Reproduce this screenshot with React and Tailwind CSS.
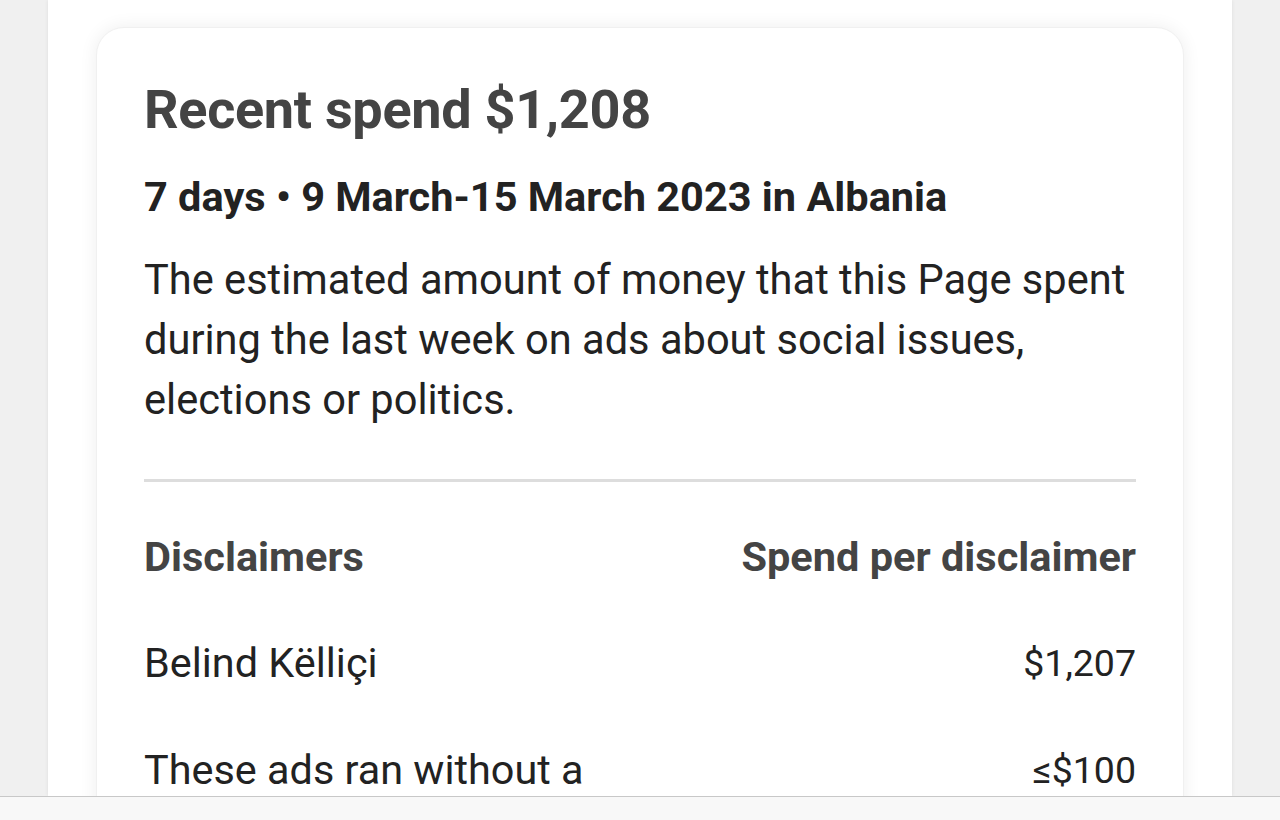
// App.jsx

const rows = [
  { name: 'Belind Këlliçi', amount: '$1,207', gap: 'mt-[58px]' },
  { name: 'These ads ran without a', amount: '≤$100', gap: 'mt-[59px]' },
];

const App = () => {
  return (
    <div
      className="w-[1280px] h-[820px] flex flex-col bg-[#f0f0f0] overflow-hidden"
      style={{ fontFamily: 'Roboto, "Noto Sans", Arial, sans-serif' }}
    >
      {/* PAGE */}
      <div className="flex-1 min-h-0 overflow-hidden px-[48px]">
        <div className="h-full bg-white px-[48px] pt-[27px] shadow-[0_0_4px_rgba(0,0,0,0.08)]">

          {/* CARD */}
          <div className="bg-white rounded-[28px] shadow-[0_0_18px_rgba(0,0,0,0.07)] border border-[#f0f0f0] px-[47px] pt-[50px] pb-24">

            <h2 className="text-[54px] leading-[64px] font-bold text-[#444444] tracking-[-0.3px]">
              Recent spend $1,208
            </h2>

            <p className="mt-[31px] text-[41.5px] leading-[48px] font-bold text-[#222222]">
              7 days • 9 March-15 March 2023 in Albania
            </p>

            <p className="mt-[29px] text-[41.6px] leading-[60px] text-[#222222]">
              The estimated amount of money that this Page spent
              during the last week on ads about social issues,
              elections or politics.
            </p>

            <div className="mt-[49px] h-[3px] bg-[#dddddd]" />

            {/* TABLE HEADER */}
            <div className="flex items-center justify-between mt-[51px] text-[41.5px] leading-[48px] font-bold text-[#444444]">
              <span>Disclaimers</span>
              <span>Spend per disclaimer</span>
            </div>

            {/* ROWS */}
            {rows.map((row) => (
              <div
                key={row.name}
                className={`flex items-center justify-between ${row.gap} leading-[48px] text-[#222222]`}
              >
                <span className="text-[41.4px]">{row.name}</span>
                <span className="text-[37.5px]">{row.amount}</span>
              </div>
            ))}

          </div>
        </div>
      </div>

      {/* BOTTOM BAR */}
      <div className="h-[24px] shrink-0 border-t border-[#c8c8c8] bg-[#f8f8f8]" />
    </div>
  );
};

export default App;
